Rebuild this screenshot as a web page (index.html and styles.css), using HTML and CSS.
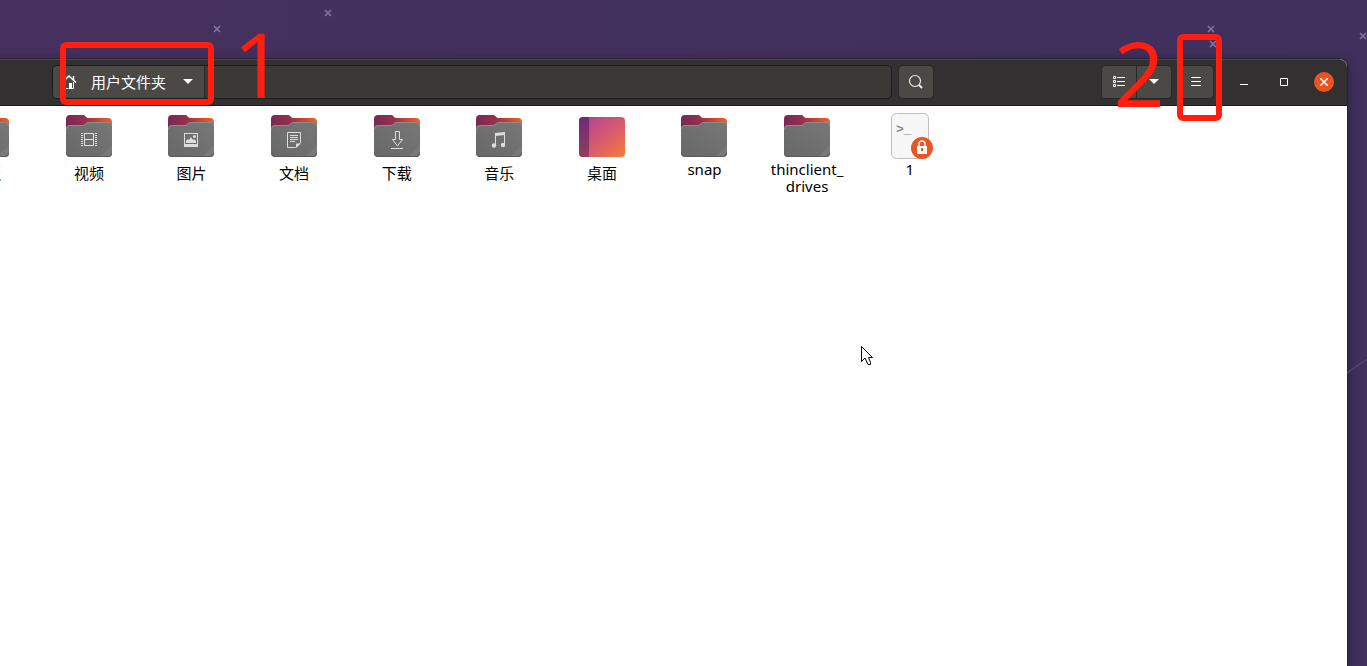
FILE: index.html
```
<!DOCTYPE html>
<html lang="zh-CN">
  <head>
    <meta charset="UTF-8" />
    <meta name="viewport" content="width=device-width, initial-scale=1.0" />
    <title>用户文件夹</title>
    <link rel="stylesheet" href="styles.css">
  </head>
  <body>
    <!-- shared shapes -->
    <svg class="defs" width="0" height="0" aria-hidden="true">
      <defs>
        <linearGradient id="back" x1="0" x2="1" y1="0" y2="0">
          <stop offset="0" stop-color="#772953" />
          <stop offset="0.42" stop-color="#98304c" />
          <stop offset="0.7" stop-color="#c9452f" />
          <stop offset="1" stop-color="#f0632a" />
        </linearGradient>
        <linearGradient id="front" x1="0" x2="1" y1="1" y2="0">
          <stop offset="0" stop-color="#686868" />
          <stop offset="1" stop-color="#777" />
        </linearGradient>
        <linearGradient id="desk" x1="0" x2="1" y1="0" y2="1">
          <stop offset="0" stop-color="#ad3d9c" />
          <stop offset="0.55" stop-color="#d85c6c" />
          <stop offset="1" stop-color="#f77b36" />
        </linearGradient>
        <linearGradient id="strip" x1="0" x2="0" y1="0" y2="1">
          <stop offset="0" stop-color="#6f2b78" />
          <stop offset="1" stop-color="#913f5c" />
        </linearGradient>
        <symbol id="folder" viewBox="0 0 48 48">
          <path fill="url(#back)" d="M1 20V7a4 4 0 0 1 4-4h13.500c2 0 2.500 3 4.500 3H43a4 4 0 0 1 4 4v10z" />
          <path fill="url(#front)" d="M1 17a4 4 0 0 1 4-4h13c2.500 0 3-3 5.500-3H43a4 4 0 0 1 4 4v27a4 4 0 0 1-4 4H5a4 4 0 0 1-4-4z" />
          <path fill="none" stroke="#8c8c8c" d="M1.500 17a3.500 3.500 0 0 1 3.500-3.500h13c2.500 0 3-3 5.500-3H43a3.500 3.500 0 0 1 3.500 3.500" />
          <path fill="#797979" d="M47 33v8a4 4 0 0 1-4 4h-8z" />
          <path fill="none" stroke="#5a5a5a" d="M1.500 41a3.500 3.500 0 0 0 3.500 3.500h38a3.500 3.500 0 0 0 3.500-3.500" />
        </symbol>
        <symbol id="star" viewBox="0 0 8 8">
          <path stroke="#8577a0" stroke-width="1.500" d="M1 1l6 6M7 1L1 7" />
        </symbol>
      </defs>
    </svg>

    <svg class="star star-a" aria-hidden="true"><use href="#star" /></svg>
    <svg class="star star-b" aria-hidden="true"><use href="#star" /></svg>
    <svg class="star star-c" aria-hidden="true"><use href="#star" /></svg>
    <svg class="star star-d" aria-hidden="true"><use href="#star" /></svg>
    <svg class="star star-e" aria-hidden="true"><use href="#star" /></svg>
    <svg class="streak" viewBox="0 0 20 16" aria-hidden="true"><path stroke="#54446f" stroke-width="1.500" d="M0 15L20 1" /></svg>

    <main class="window">
      <header class="titlebar">
        <nav class="pathbar">
          <button class="path-btn">
            <svg width="16" height="16" viewBox="0 0 16 16" fill="none" stroke="#fff" aria-hidden="true">
              <path stroke-width="1.500" d="M1 8.500L8 2l7 6.500" />
              <path stroke-width="1.500" d="M12.500 2v4" />
              <path d="M3.500 8v6.500h4M12.500 8v6.500h-2" />
              <path fill="#fff" stroke="none" d="M8 9h3v6H8z" />
            </svg>
            <span>用户文件夹</span>
            <svg class="arrow" width="10" height="6" viewBox="0 0 10 6" aria-hidden="true"><path fill="#fff" d="M0 0h10L5 5z" /></svg>
          </button>
        </nav>
        <button class="tool search" aria-label="搜索">
          <svg width="16" height="16" viewBox="0 0 16 16" fill="none" stroke="#eee" aria-hidden="true">
            <circle cx="7" cy="7" r="5.500" stroke-width="1.200" />
            <path stroke-width="2" d="M11 11l3 3" />
          </svg>
        </button>
        <div class="view-group">
          <button class="tool" aria-label="列表视图">
            <svg width="14" height="12" viewBox="0 0 14 12" fill="none" stroke="#fff" aria-hidden="true">
              <path d="M1.500.5h2v2h-2zM1.500 4.500h2v2h-2zM1.500 8.500h2v2h-2zM5 1.500h8M5 5.500h8M5 9.500h8" />
            </svg>
          </button>
          <button class="tool" aria-label="视图选项">
            <svg width="10" height="6" viewBox="0 0 10 6" aria-hidden="true"><path fill="#fff" d="M0 0h10L5 5z" /></svg>
          </button>
        </div>
        <button class="tool" aria-label="菜单">
          <svg width="10" height="10" viewBox="0 0 10 10" stroke="#fff" aria-hidden="true"><path d="M0 .5h10M0 4.500h10M0 8.500h10" /></svg>
        </button>
        <div class="controls">
          <button aria-label="最小化">
            <svg width="8" height="8" viewBox="0 0 8 8" stroke="#fff" aria-hidden="true"><path d="M0 6.500h8" /></svg>
          </button>
          <button aria-label="最大化">
            <svg width="8" height="8" viewBox="0 0 8 8" fill="none" stroke="#fff" aria-hidden="true"><path d="M.5.5h7v7h-7z" /></svg>
          </button>
          <button class="close" aria-label="关闭">
            <svg width="8" height="8" viewBox="0 0 8 8" stroke="#fff" stroke-width="1.500" aria-hidden="true"><path d="M0 0l8 8M8 0L0 8" /></svg>
          </button>
        </div>
      </header>

      <section class="files">
        <div class="file">
          <svg class="icon" viewBox="0 0 48 48" aria-hidden="true"><use href="#folder" /></svg>
          <span class="zh">模板</span>
        </div>
        <div class="file">
          <svg class="icon" viewBox="0 0 48 48" aria-hidden="true">
            <use href="#folder" />
            <g fill="none" stroke="#ddd">
              <path d="M19.500 21v13M28.500 21v13M20 21.500h8M20 27.500h8M20 33.500h8" />
              <path stroke-width="2" stroke-dasharray="1 1" d="M17 21v13M31 21v13" />
            </g>
          </svg>
          <span class="zh">视频</span>
        </div>
        <div class="file">
          <svg class="icon" viewBox="0 0 48 48" aria-hidden="true">
            <use href="#folder" />
            <path fill="#ddd" fill-rule="evenodd" d="M17 21h14v14H17zM18 22v10h12V22z" />
            <path fill="#ddd" d="M19 31v-2l2-2 1 1 2-3 2 3 1-1 2 2v2z" />
            <circle cx="27.500" cy="24.500" r="1.500" fill="#ddd" />
          </svg>
          <span class="zh">图片</span>
        </div>
        <div class="file">
          <svg class="icon" viewBox="0 0 48 48" aria-hidden="true">
            <use href="#folder" />
            <path fill="none" stroke="#ddd" d="M17.500 20.500h13v10l-5 5h-8zM20 23.500h8M20 25.500h8M20 27.500h8M20 29.500h5" />
            <path fill="#ddd" d="M26 36v-4.500h5z" />
          </svg>
          <span class="zh">文档</span>
        </div>
        <div class="file">
          <svg class="icon" viewBox="0 0 48 48" aria-hidden="true">
            <use href="#folder" />
            <path fill="none" stroke="#ddd" d="M22.500 19.500h4v8h3L24.500 34l-5-6.500h3zM18 36.500h12" />
          </svg>
          <span class="zh">下载</span>
        </div>
        <div class="file">
          <svg class="icon" viewBox="0 0 48 48" aria-hidden="true">
            <use href="#folder" />
            <path fill="#ddd" d="M20 21l10-1v3l-10 1z" />
            <path fill="none" stroke="#ddd" d="M20.500 22v11M29.500 21v12" />
            <circle cx="19" cy="33.500" r="2.200" fill="#ddd" />
            <circle cx="28" cy="33" r="2.200" fill="#ddd" />
          </svg>
          <span class="zh">音乐</span>
        </div>
        <div class="file">
          <svg class="icon" viewBox="0 0 48 48" aria-hidden="true">
            <rect x="1" y="5" width="46" height="40" rx="4" fill="url(#desk)" />
            <path fill="url(#strip)" d="M11 5v40H5a4 4 0 0 1-4-4V9a4 4 0 0 1 4-4z" />
          </svg>
          <span class="zh">桌面</span>
        </div>
        <div class="file">
          <svg class="icon" viewBox="0 0 48 48" aria-hidden="true"><use href="#folder" /></svg>
          <span>snap</span>
        </div>
        <div class="file">
          <svg class="icon" viewBox="0 0 48 48" aria-hidden="true"><use href="#folder" /></svg>
          <span>thinclient_<br />drives</span>
        </div>
        <div class="file">
          <svg class="icon" viewBox="0 0 48 48" aria-hidden="true">
            <rect x="5.500" y="1.500" width="37" height="45" rx="5" fill="#f7f7f7" stroke="#bfbfbf" />
            <text class="prompt" x="10" y="21">&gt;_</text>
            <circle cx="36" cy="36" r="11" fill="#e95420" />
            <path fill="none" stroke="#fff" stroke-width="1.500" d="M33 35v-3a3 3 0 0 1 6 0v3" />
            <path fill="#fff" fill-rule="evenodd" d="M31 34h10v8H31zM35 36v3h2v-3z" />
          </svg>
          <span>1</span>
        </div>
      </section>
    </main>

    <div class="mark mark-path"></div>
    <div class="mark-num num-path">1</div>
    <div class="mark mark-menu"></div>
    <div class="mark-num num-menu">2</div>

    <svg class="cursor" width="14" height="21" viewBox="0 0 14 21" aria-hidden="true">
      <path fill="#fff" stroke="#000" d="M.5.500v15l3.500-3.500 3 6.500h2.500v-2L7.500 11.500h4z" />
    </svg>
  </body>
</html>
```
FILE: styles.css
```
* {
  box-sizing: border-box;
  margin: 0;
  padding: 0;
}
body {
  position: relative;
  min-height: 100vh;
  display: flex;
  overflow: hidden;
  padding: 59px 20px 0 0;
  background: linear-gradient(90deg, #46305f 0%, #3f305d 100%);
  font-family: "Noto Sans", "Noto Sans CJK SC", sans-serif;
  font-size: 15px;
  color: #000;
}
button {
  border: none;
  background: none;
  color: white;
  font: inherit;
  display: flex;
  align-items: center;
  justify-content: center;
}
.defs {
  position: absolute;
}

/* wallpaper */
.star {
  position: absolute;
  width: 8px;
  height: 8px;
}
.star-a {
  left: 213px;
  top: 25px;
}
.star-b {
  left: 324px;
  top: 9px;
}
.star-c {
  right: 152px;
  top: 25px;
}
.star-d {
  right: 150px;
  top: 40px;
}
.star-e {
  right: 0;
  top: 32px;
}
.streak {
  position: absolute;
  right: 0;
  top: 358px;
  width: 20px;
  height: 16px;
}

/* window */
.window {
  flex: 1;
  min-width: 0;
  background: white;
  border-radius: 0 8px 0 0;
  box-shadow: 0 0 0 1px #2a2038, 0 3px 14px rgba(0, 0, 0, 0.4);
}
.titlebar {
  display: flex;
  align-items: center;
  height: 47px;
  padding: 0 13px 2px 52px;
  background: #323030;
  border-top: 1px solid #4a4848;
  border-bottom: 1px solid #1c1b1b;
  border-radius: 0 8px 0 0;
}
.pathbar {
  flex: 1;
  display: flex;
  height: 34px;
  margin-right: 7px;
  background: #3a3936;
  border: 1px solid #1e1d1d;
  border-radius: 5px;
}
.path-btn {
  gap: 14px;
  padding: 0 11px 0 8px;
  background: #4a4946;
  border-right: 1px solid #2a2929;
  border-radius: 4px 0 0 4px;
}
.path-btn .arrow {
  margin-left: 3px;
}
.tool {
  width: 34px;
  height: 32px;
  background: #4a4946;
  border-radius: 4px;
  box-shadow: 0 0 0 1px #2a2929;
}
.search {
  margin-right: 169px;
}
.view-group {
  display: flex;
  gap: 1px;
  margin-right: 8px;
}
.view-group .tool:first-child {
  border-radius: 4px 0 0 4px;
}
.view-group .tool:last-child {
  border-radius: 0 4px 4px 0;
}
.controls {
  display: flex;
  gap: 20px;
  margin-left: 21px;
}
.controls button {
  width: 20px;
  height: 20px;
  border-radius: 50%;
}
.controls .close {
  background: #e95420;
}

/* icon view, first column runs off the left edge */
.files {
  display: grid;
  grid-template-columns: repeat(10, 1fr);
  margin: 0 386px 0 -65px;
  padding-top: 6px;
}
.file {
  display: flex;
  flex-direction: column;
  align-items: center;
  gap: 1px;
  text-align: center;
  line-height: 17px;
}
.icon {
  width: 48px;
  height: 48px;
}
.zh {
  line-height: 25px;
}
.prompt {
  font-family: "Liberation Mono", monospace;
  font-size: 13px;
  font-weight: bold;
  fill: #888;
}

/* red marks over the window */
.mark {
  position: absolute;
  border: 6px solid #ff1e10;
  border-radius: 6px;
}
.mark-path {
  left: 60px;
  top: 42px;
  width: 154px;
  height: 63px;
}
.mark-menu {
  right: 145px;
  top: 34px;
  width: 45px;
  height: 87px;
}
.mark-num {
  position: absolute;
  color: #ff1e10;
  font-family: "Open Sans", sans-serif;
  font-size: 90px;
  line-height: 90px;
}
.num-path {
  left: 233px;
  top: 18px;
}
.num-menu {
  right: 202px;
  top: 27px;
}
.cursor {
  position: absolute;
  left: 861px;
  top: 346px;
}
```
